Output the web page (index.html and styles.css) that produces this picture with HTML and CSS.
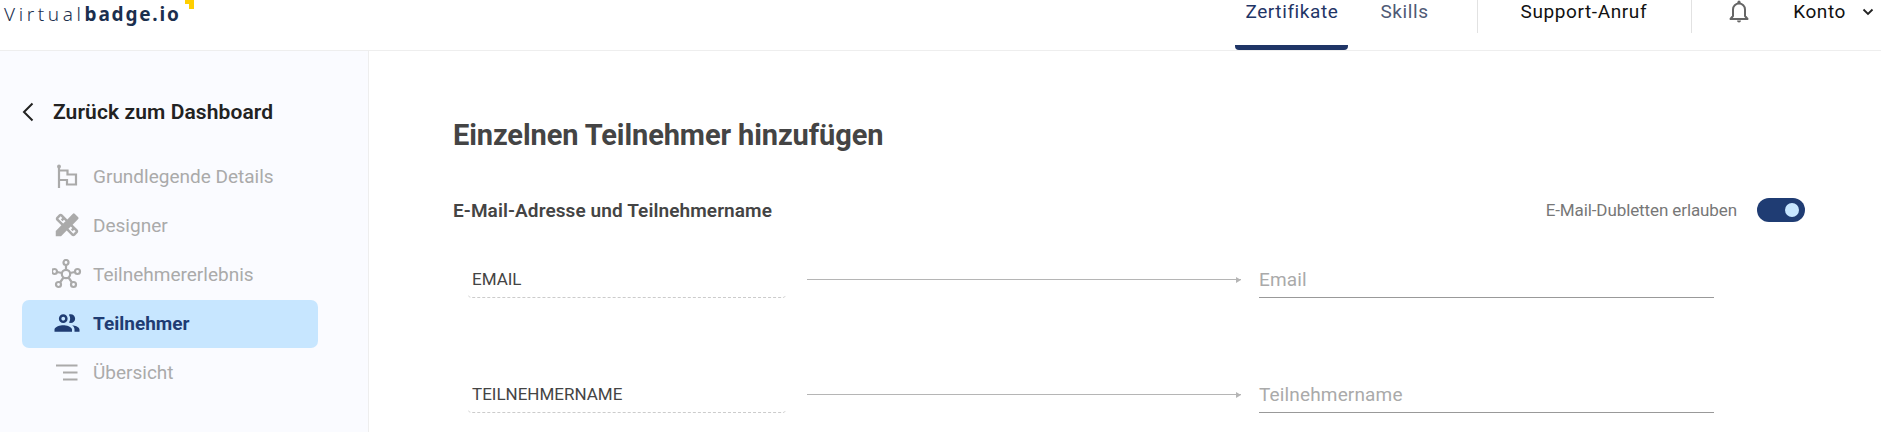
FILE: index.html
```html
<!DOCTYPE html>
<html>
  <head>
    <title>Einzelnen Teilnehmer hinzufügen</title>
    <link rel="stylesheet" href="styles.css">
  </head>
  <body>
    <header class="topbar">
      <div class="logo">
        <span class="logo-light">Virtual</span><span class="logo-bold">badge.io</span>
        <span class="logo-corner"></span>
      </div>
      <nav class="nav">
        <a class="tab active">Zertifikate</a>
        <a class="tab skills">Skills</a>
        <span class="divider first"></span>
        <a class="support">Support-Anruf</a>
        <span class="divider second"></span>
        <svg class="bell" viewBox="0 0 24 24" width="24" height="24">
          <path d="M3.500 19h17l-2.500-3V9.500a6 6 0 0 0-12 0V16z" fill="none" stroke="#666" stroke-width="2" stroke-linejoin="round" />
          <circle cx="12" cy="2.200" r="1.600" fill="#666" />
          <path d="M10 20.500h4a2 2 0 0 1-4 0z" fill="#666" />
        </svg>
        <a class="account">Konto</a>
        <svg class="caret" viewBox="0 0 12 8" width="12" height="8">
          <path d="M1.500 1.500 6 6l4.500-4.500" fill="none" stroke="#222" stroke-width="1.800" />
        </svg>
      </nav>
    </header>

    <div class="layout">
      <aside class="sidebar">
        <a class="back">
          <svg viewBox="0 0 12 20" width="12" height="20">
            <path d="M10.500 1.500 2 10l8.500 8.500" fill="none" stroke="#222" stroke-width="2" />
          </svg>
          <span>Zurück zum Dashboard</span>
        </a>
        <ul class="steps">
          <li class="step">
            <svg viewBox="-3 -3 30 30" width="30" height="30">
              <circle cx="4" cy="2.500" r="1.900" fill="#aaa" />
              <path d="M4 3v21M4 6.500h8.500v4H21v10h-9v-4.500H4" fill="none" stroke="#aaa" stroke-width="2.200" />
            </svg>
            <span>Grundlegende Details</span>
          </li>
          <li class="step">
            <svg viewBox="0 0 24 24" width="30" height="30">
              <path fill="#aaa" d="M20.970 7.270c.39-.39.39-1.020 0-1.410l-2.830-2.830a.9959.9959 0 0 0-1.410 0l-4.490 4.490-3.890-3.890c-.78-.78-2.050-.78-2.830 0l-1.900 1.900c-.78.78-.78 2.050 0 2.830l3.890 3.890L3 16.760V21h4.240l4.520-4.520 3.890 3.890c.95.95 2.230.6 2.830 0l1.900-1.900c.78-.78.78-2.050 0-2.830l-3.890-3.890 4.480-4.480zM5.040 6.940l1.890-1.900L8.200 6.310 7.020 7.500l1.410 1.410 1.190-1.190 1.200 1.200-1.900 1.900-3.880-3.880zm11.230 7.440-1.190 1.190 1.410 1.410 1.190-1.190 1.270 1.270-1.900 1.900-3.890-3.890 1.900-1.900 1.210 1.210z" />
            </svg>
            <span>Designer</span>
          </li>
          <li class="step">
            <svg viewBox="1 0 30 30" width="30" height="30">
              <g fill="none" stroke="#aaa" stroke-width="2.200">
                <circle cx="15" cy="15" r="4.200" />
                <circle cx="15" cy="3.500" r="2.500" />
                <circle cx="3.500" cy="12.500" r="2.500" />
                <circle cx="26.500" cy="12.500" r="2.500" />
                <circle cx="7.500" cy="25.500" r="2.500" />
                <circle cx="22.500" cy="25.500" r="2.500" />
                <path d="M15 6v5M6 13l5 1M24 13l-5 1M9 23.500l3.500-5M21 23.500l-3.500-5" />
              </g>
            </svg>
            <span>Teilnehmererlebnis</span>
          </li>
          <li class="step current">
            <svg viewBox="0 0 24 24" width="30" height="30">
              <path fill="#1f3c73" d="M9 13.750c-2.340 0-7 1.170-7 3.500V19h14v-1.750c0-2.330-4.660-3.500-7-3.500zM9 12c1.930 0 3.500-1.570 3.500-3.500S10.930 5 9 5 5.500 6.570 5.500 8.500 7.070 12 9 12zm0-5c.83 0 1.500.67 1.500 1.500S9.830 10 9 10s-1.500-.67-1.500-1.500S8.170 7 9 7zm7.040 6.810c1.160.84 1.960 1.960 1.960 3.440V19h4v-1.750c0-2.020-3.500-3.170-5.960-3.440zM15 12c1.930 0 3.500-1.570 3.500-3.500S16.930 5 15 5c-.54 0-1.040.13-1.500.35.63.89 1 1.980 1 3.150s-.37 2.260-1 3.150c.46.22.96.35 1.500.35z" />
            </svg>
            <span>Teilnehmer</span>
          </li>
          <li class="step">
            <svg viewBox="-3 -3 30 30" width="30" height="30">
              <path d="M1 5.500h21.500M8 12.500h14.500M8 19.500h14.500" fill="none" stroke="#aaa" stroke-width="2.200" />
            </svg>
            <span>Übersicht</span>
          </li>
        </ul>
      </aside>

      <main class="content">
        <h1 class="title">Einzelnen Teilnehmer hinzufügen</h1>
        <div class="section-head">
          <h2>E-Mail-Adresse und Teilnehmername</h2>
          <div class="duplicates">
            <span>E-Mail-Dubletten erlauben</span>
            <span class="toggle"><span class="knob"></span></span>
          </div>
        </div>
        <div class="mapping">
          <div class="source">EMAIL</div>
          <div class="arrow"></div>
          <div class="target">Email</div>
        </div>
        <div class="mapping">
          <div class="source">TEILNEHMERNAME</div>
          <div class="arrow"></div>
          <div class="target">Teilnehmername</div>
        </div>
      </main>
    </div>
  </body>
</html>
```

FILE: styles.css
```css
* {
  box-sizing: border-box;
}

body {
  margin: 0;
  height: 100vh;
  overflow: hidden;
  background: #fff;
  font-family: Roboto, Arial, sans-serif;
  color: #444;
}

/* top bar */
.topbar {
  display: flex;
  justify-content: space-between;
  height: 51px;
  border-bottom: 1px solid #eee;
}

.logo {
  position: relative;
  height: 26px;
  padding: 0 0 0 4px;
  font-family: "Noto Sans", sans-serif;
  font-size: 19px;
  line-height: 28px;
  color: #1b2f4e;
  white-space: nowrap;
}

.logo-light {
  font-weight: 300;
  letter-spacing: 3.600px;
}

.logo-bold {
  font-weight: 700;
  letter-spacing: 1.800px;
}

.logo-corner {
  position: absolute;
  top: -1px;
  right: -13px;
  width: 9px;
  height: 10px;
  border-top: 5px solid #ffcf00;
  border-right: 5px solid #ffcf00;
}

.nav {
  display: flex;
  align-items: flex-start;
  font-size: 19px;
  letter-spacing: 0.600px;
  line-height: 24px;
}

.tab {
  display: flex;
  flex-direction: column;
  justify-content: space-between;
  height: 50px;
  color: #2f3f5f;
}

.tab.active {
  width: 113px;
  margin-right: 32px;
  text-align: center;
  color: #1f3566;
}

.tab.active::after {
  content: "";
  height: 5px;
  background: #1f3566;
  border-radius: 0 0 4px 4px;
}

.skills {
  color: #4f5a75;
}

.divider {
  width: 1px;
  height: 33px;
  background: #e2e2e2;
}

.divider.first {
  margin: 0 43px 0 48px;
}

.divider.second {
  margin: 0 35px 0 44px;
}

.support {
  color: #111;
}

.bell {
  margin-right: 42px;
}

.account {
  color: #111;
}

.caret {
  margin: 8px 7px 0 16px;
}

/* sidebar */
.layout {
  display: flex;
  height: 381px;
}

.sidebar {
  flex: none;
  width: 369px;
  padding: 51px 0 0 22px;
  background: #fafbff;
  border-right: 1px solid #eee;
}

.back {
  display: flex;
  align-items: center;
  gap: 19px;
  height: 20px;
  font-size: 21px;
  font-weight: 600;
  letter-spacing: 0.100px;
  color: #222;
}

.steps {
  list-style: none;
  margin: 31px 0 0;
  padding: 0;
}

.step {
  display: flex;
  align-items: center;
  width: 296px;
  height: 48px;
  margin-bottom: 1px;
  padding: 0 0 2px 30px;
  border-radius: 7px;
  font-size: 19px;
  color: #aaa;
}

.step svg {
  flex: none;
  margin-right: 11px;
}

.step.current {
  background: #c7e6ff;
  font-weight: 700;
  color: #1f3c73;
}

/* main form */
.content {
  flex: 1;
  padding: 66px 76px 0 84px;
}

.title {
  margin: 0;
  font-size: 29px;
  font-weight: 700;
  letter-spacing: -0.100px;
  line-height: 36px;
  color: #444;
}

.section-head {
  display: flex;
  align-items: center;
  justify-content: space-between;
  height: 24px;
  margin-top: 45px;
}

.section-head h2 {
  margin: 0;
  font-size: 19px;
  font-weight: 600;
  letter-spacing: 0.100px;
  color: #444;
}

.duplicates {
  display: flex;
  align-items: center;
  gap: 20px;
  font-size: 17px;
  letter-spacing: -0.100px;
  color: #777;
}

.toggle {
  display: flex;
  align-items: center;
  justify-content: flex-end;
  width: 48px;
  height: 24px;
  padding-right: 6px;
  background: #1f3c73;
  border-radius: 12px;
}

.knob {
  width: 14px;
  height: 14px;
  background: #c7e6ff;
  border-radius: 50%;
}

.mapping {
  display: flex;
  align-items: flex-start;
  height: 30px;
  margin: 46px 0 0 15px;
}

.mapping + .mapping {
  margin-top: 85px;
}

.source {
  width: 318px;
  height: 30px;
  padding: 0 4px;
  border-bottom: 1px dashed #ccc;
  border-radius: 0 0 4px 4px;
  font-size: 17px;
  line-height: 22px;
  color: #444;
}

.arrow {
  display: flex;
  align-items: center;
  justify-content: flex-end;
  width: 434px;
  height: 1px;
  margin: 11px 18px 0 21px;
  background: #b5b5b5;
}

.arrow::after {
  content: "";
  border-left: 5px solid #b5b5b5;
  border-top: 3px solid transparent;
  border-bottom: 3px solid transparent;
}

.target {
  width: 455px;
  height: 30px;
  border-bottom: 1px solid #999;
  font-size: 19px;
  line-height: 24px;
  color: #aaa;
  letter-spacing: 0.150px;
}
```
